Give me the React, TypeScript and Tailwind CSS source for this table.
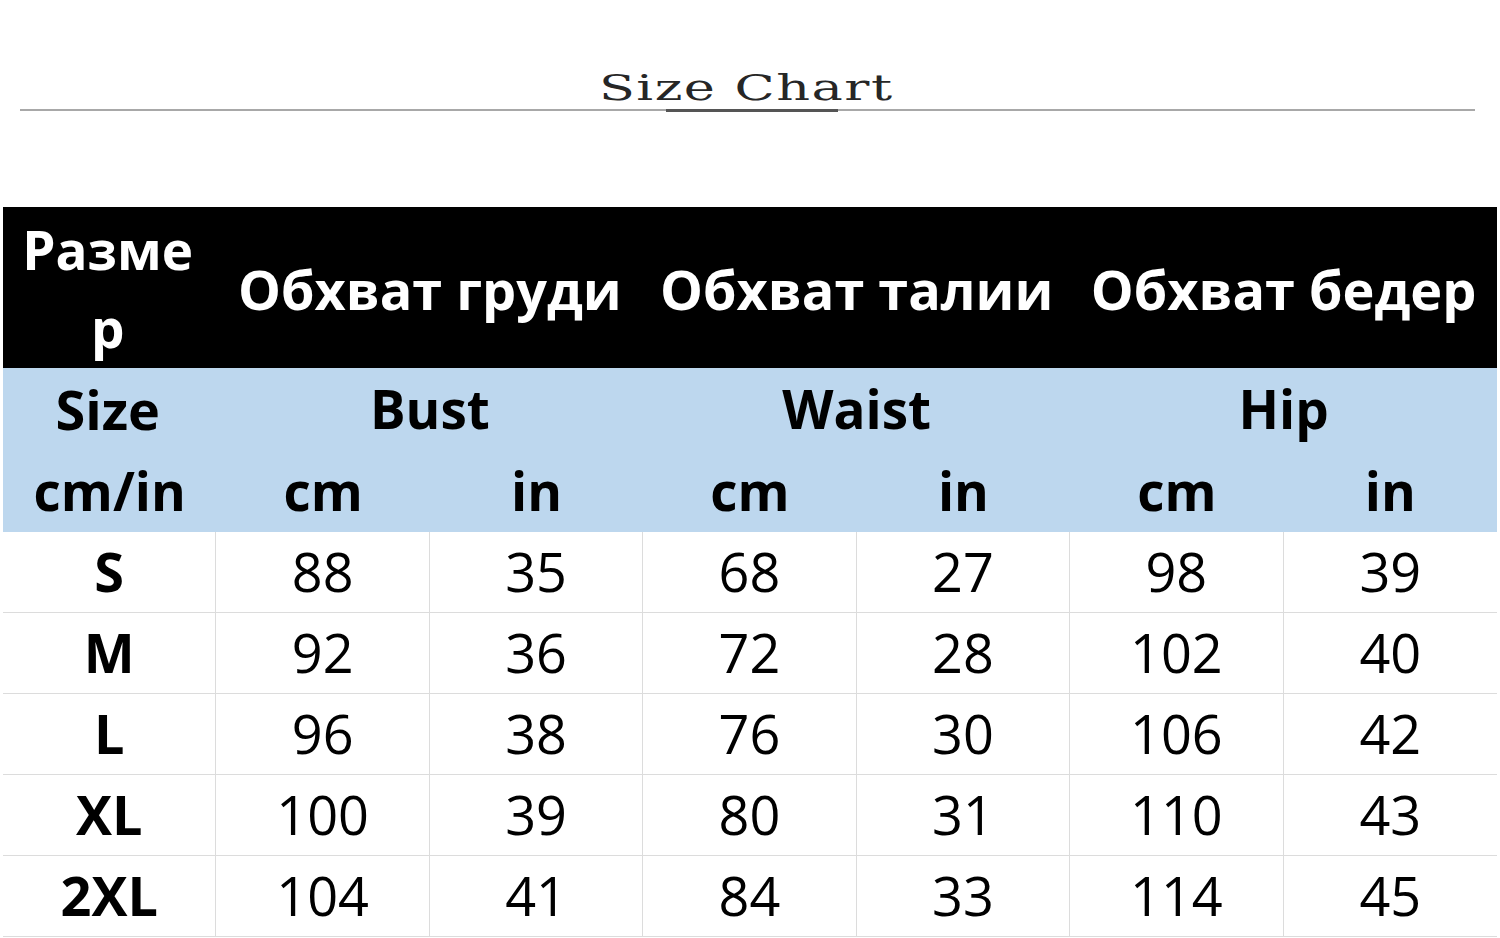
import React from "react";

const rows: [string, string, string, string, string, string, string][] = [
  ["S", "88", "35", "68", "27", "98", "39"],
  ["M", "92", "36", "72", "28", "102", "40"],
  ["L", "96", "38", "76", "30", "106", "42"],
  ["XL", "100", "39", "80", "31", "110", "43"],
  ["2XL", "104", "41", "84", "33", "114", "45"],
];

export default function App() {
  return (
    <div
      className="w-[1500px] h-[938px] bg-white overflow-hidden"
      style={{ fontFamily: '"Open Sans", "Noto Sans", sans-serif' }}
    >
      {/* Title area */}
      <div className="h-[207px] flex flex-col">
        <div className="pt-[68px] h-[108px] flex justify-center">
          <div
            className="text-[35px] leading-[40px] tracking-[1px] text-[#262626] scale-x-[1.5] ml-[-8px]"
            style={{ fontFamily: '"DejaVu Serif", "Liberation Serif", serif' }}
          >
            Size Chart
          </div>
        </div>
        <div className="flex items-center h-[4px] pl-[20px]">
          <div className="w-[646px] h-[2px] bg-[#a8a8a8]" />
          <div className="w-[172px] h-[3px] bg-[#555555]" />
          <div className="w-[637px] h-[2px] bg-[#a8a8a8]" />
        </div>
      </div>

      {/* Table */}
      <div className="ml-[3px] w-[1494px] grid grid-cols-7">
        {/* Black header */}
        <div className="bg-black h-[161px] flex items-center justify-center text-white font-bold text-[53px] leading-[78px] text-center pt-[2px] pr-[4px]">
          <span>
            Разме
            <br />р
          </span>
        </div>
        <div className="col-span-2 bg-black h-[161px] flex items-center justify-center text-white font-bold text-[54px] pt-[4px] whitespace-nowrap">
          Обхват груди
        </div>
        <div className="col-span-2 bg-black h-[161px] flex items-center justify-center text-white font-bold text-[54px] pt-[4px] whitespace-nowrap">
          Обхват талии
        </div>
        <div className="col-span-2 bg-black h-[161px] flex items-center justify-center text-white font-bold text-[54px] pt-[4px] whitespace-nowrap">
          Обхват бедер
        </div>

        {/* Blue band row 1 */}
        <div className="bg-[#bdd7ee] h-[82px] flex items-center justify-center font-bold text-[54px] text-black pr-[4px]">
          Size
        </div>
        <div className="col-span-2 bg-[#bdd7ee] h-[82px] flex items-center justify-center font-bold text-[53px] text-black">
          Bust
        </div>
        <div className="col-span-2 bg-[#bdd7ee] h-[82px] flex items-center justify-center font-bold text-[53px] text-black">
          Waist
        </div>
        <div className="col-span-2 bg-[#bdd7ee] h-[82px] flex items-center justify-center font-bold text-[53px] text-black">
          Hip
        </div>

        {/* Blue band row 2 */}
        {["cm/in", "cm", "in", "cm", "in", "cm", "in"].map((t, i) => (
          <div
            key={"u" + i}
            className="bg-[#bdd7ee] h-[82px] flex items-center justify-center font-bold text-[53px] text-black"
          >
            {t}
          </div>
        ))}

        {/* Data rows */}
        {rows.map((r, ri) =>
          r.map((v, ci) => (
            <div
              key={ri + "-" + ci}
              className={
                "h-[81px] flex items-center justify-center text-[54px] text-black border-b border-[#dcdcdc] pb-[2px] " +
                (ci < 6 ? "border-r " : "") +
                (ci === 0 ? "font-bold" : "font-normal")
              }
            >
              {v}
            </div>
          ))
        )}
      </div>
    </div>
  );
}
